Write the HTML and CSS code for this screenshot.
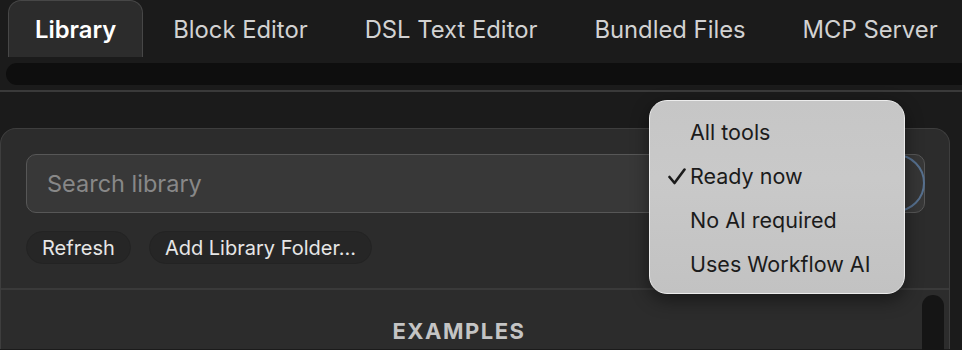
FILE: index.html
```html
<!DOCTYPE html>
<html>
<head>
<meta charset="utf-8">
<link rel="stylesheet" href="styles.css">
</head>
<body>
<div class="app">
  <nav class="tabs">
    <div class="tab active">Library</div>
    <div class="tab">Block Editor</div>
    <div class="tab">DSL Text Editor</div>
    <div class="tab">Bundled Files</div>
    <div class="tab">MCP Server</div>
  </nav>
  <div class="hscroll"></div>
  <div class="rule"></div>
  <section class="panel">
    <div class="panel-top">
      <div class="search-row">
        <div class="search">Search library</div>
        <div class="filter-btn"></div>
      </div>
      <div class="actions">
        <button class="pill">Refresh</button>
        <button class="pill">Add Library Folder...</button>
      </div>
    </div>
    <div class="list">
      <div class="section-title">EXAMPLES</div>
      <div class="vscroll"></div>
    </div>
  </section>
  <div class="menu">
    <div class="item">All tools</div>
    <div class="item checked"><svg class="check" width="18" height="17" viewBox="0 0 18 17"><polyline points="1.5,9 6.5,15 16.5,1.5" fill="none" stroke="#1b1b1b" stroke-width="2.6" stroke-linecap="round" stroke-linejoin="round"/></svg>Ready now</div>
    <div class="item">No AI required</div>
    <div class="item">Uses Workflow AI</div>
  </div>
</div>
</body>
</html>
```
FILE: styles.css
```css
html, body {
  margin: 0;
  padding: 0;
  background: #1b1b1b;
  width: 962px;
  height: 350px;
  overflow: hidden;
  font-family: Inter, "Noto Sans", sans-serif;
}
.app {
  position: relative;
  width: 962px;
  height: 350px;
  overflow: hidden;
}
.tabs {
  display: flex;
  gap: 3px;
  padding-left: 8px;
  height: 57px;
  align-items: stretch;
  overflow: hidden;
}
.tab {
  flex: 0 0 auto;
  white-space: nowrap;
  padding: 0 26px;
  display: flex;
  align-items: center;
  font-size: 23.8px;
  color: #d2d2d2;
  box-sizing: border-box;
  border: 1px solid transparent;
  border-bottom: none;
}
.tab.active {
  background: #2c2c2c;
  border-color: #474747;
  border-radius: 13px 13px 0 0;
  color: #ffffff;
  font-weight: 600;
}
.hscroll {
  margin: 6px 0 0 6px;
  height: 22px;
  background: #0e0e0e;
  border-radius: 11px 0 0 11px;
}
.rule {
  margin-top: 5px;
  height: 2px;
  background: #3a3a3a;
}
.panel {
  margin-top: 36px;
  width: 950px;
  height: 221px;
  box-sizing: border-box;
  background: #2c2c2c;
  border: 1px solid #3e3e3e;
  border-bottom: none;
  border-radius: 16px 16px 0 0;
}
.panel-top {
  padding: 25px 24px 24px 25px;
  border-bottom: 2px solid #3a3a3a;
}
.search-row {
  position: relative;
}
.search {
  height: 59px;
  box-sizing: border-box;
  background: #383838;
  border: 1.5px solid #575757;
  border-radius: 10px;
  display: flex;
  align-items: center;
  padding-left: 20px;
  font-size: 23.5px;
  color: #888888;
}
.filter-btn {
  position: absolute;
  right: 0;
  top: 0;
  width: 58px;
  height: 58px;
  box-sizing: border-box;
  border-radius: 50%;
  background: #363636;
  border: 2px solid #56708f;
}
.actions {
  display: flex;
  gap: 18px;
  margin-top: 18px;
}
.pill {
  height: 33px;
  padding: 0 15px;
  background: #262626;
  border: 1px solid #232323;
  border-radius: 17px;
  color: #e6e6e6;
  font-family: Inter, "Noto Sans", sans-serif;
  font-size: 20px;
  white-space: nowrap;
}
.list {
  position: relative;
  display: flex;
  justify-content: center;
  padding-top: 28px;
}
.section-title {
  font-size: 22px;
  font-weight: 700;
  letter-spacing: 1.5px;
  color: #c4c4c4;
  margin-left: -32px;
}
.vscroll {
  position: absolute;
  right: 5px;
  top: 5px;
  width: 22px;
  height: 80px;
  border-radius: 11px;
  background: #151515;
}
.menu {
  position: absolute;
  left: 649px;
  top: 100px;
  width: 256px;
  height: 194px;
  box-sizing: border-box;
  padding: 9px 0;
  border-radius: 18px;
  background: linear-gradient(180deg, #c6c6c6 0%, #c9c9c9 40%, #c2c2c2 100%);
  border: 1px solid #ececec;
  box-shadow: 0 6px 18px rgba(0,0,0,0.45);
}
.item {
  height: 44px;
  display: flex;
  align-items: center;
  padding-left: 40px;
  position: relative;
  font-size: 21.5px;
  color: #1b1b1b;
  white-space: nowrap;
}
.check {
  position: absolute;
  left: 18px;
  top: 14px;
}
```
